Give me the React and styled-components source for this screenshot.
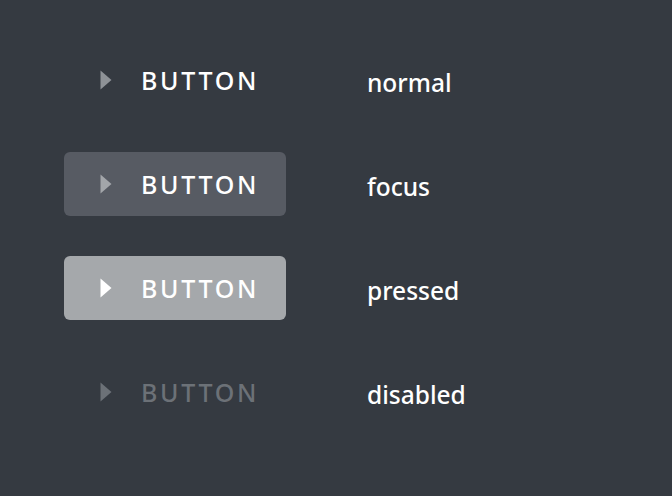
import React from "react";
import styled, { createGlobalStyle } from "styled-components";

const Global = createGlobalStyle`
  html, body { margin: 0; padding: 0; background: #353a41; }
  body { font-family: "Noto Sans", "Open Sans", sans-serif; }
`;

const Page = styled.div`
  width: 672px;
  height: 496px;
  background: #353a41;
  box-sizing: border-box;
  padding: 48px 0 0 64px;
  display: grid;
  grid-template-columns: 222px auto;
  column-gap: 81px;
  row-gap: 40px;
  grid-auto-rows: 64px;
  align-items: center;
`;

const states = {
  normal: { bg: "transparent", fg: "#ffffff", icon: "#8e9297" },
  focus: { bg: "#575b63", fg: "#ffffff", icon: "#a3a6aa" },
  pressed: { bg: "#a5a8ab", fg: "#ffffff", icon: "#ffffff" },
  disabled: { bg: "transparent", fg: "#6c7177", icon: "#6c7177" },
};

const Button = styled.div`
  height: 64px;
  width: 222px;
  border-radius: 6px;
  background: ${(p) => states[p.$state].bg};
  color: ${(p) => states[p.$state].fg};
  display: flex;
  align-items: center;
  padding-left: 36px;
  box-sizing: border-box;
  gap: 29px;
`;

const Icon = styled.svg`
  width: 12px;
  height: 20px;
  flex: none;
  fill: ${(p) => states[p.$state].icon};
`;

const ButtonText = styled.span`
  font-size: 25px;
  font-weight: 500;
  letter-spacing: 2.7px;
  line-height: 1;
`;

const Label = styled.span`
  color: #ffffff;
  font-size: 24.5px;
  font-weight: 500;
  line-height: 1;
  padding-top: 6px;
`;

const rows = ["normal", "focus", "pressed", "disabled"];

export default function App() {
  return (
    <>
      <Global />
      <Page>
        {rows.map((s) => (
          <React.Fragment key={s}>
            <Button $state={s}>
              <Icon $state={s} viewBox="0 0 12 20">
                <path d="M0.5 0.5 L11.5 10 L0.5 19.5 Z" />
              </Icon>
              <ButtonText>BUTTON</ButtonText>
            </Button>
            <Label>{s}</Label>
          </React.Fragment>
        ))}
      </Page>
    </>
  );
}
